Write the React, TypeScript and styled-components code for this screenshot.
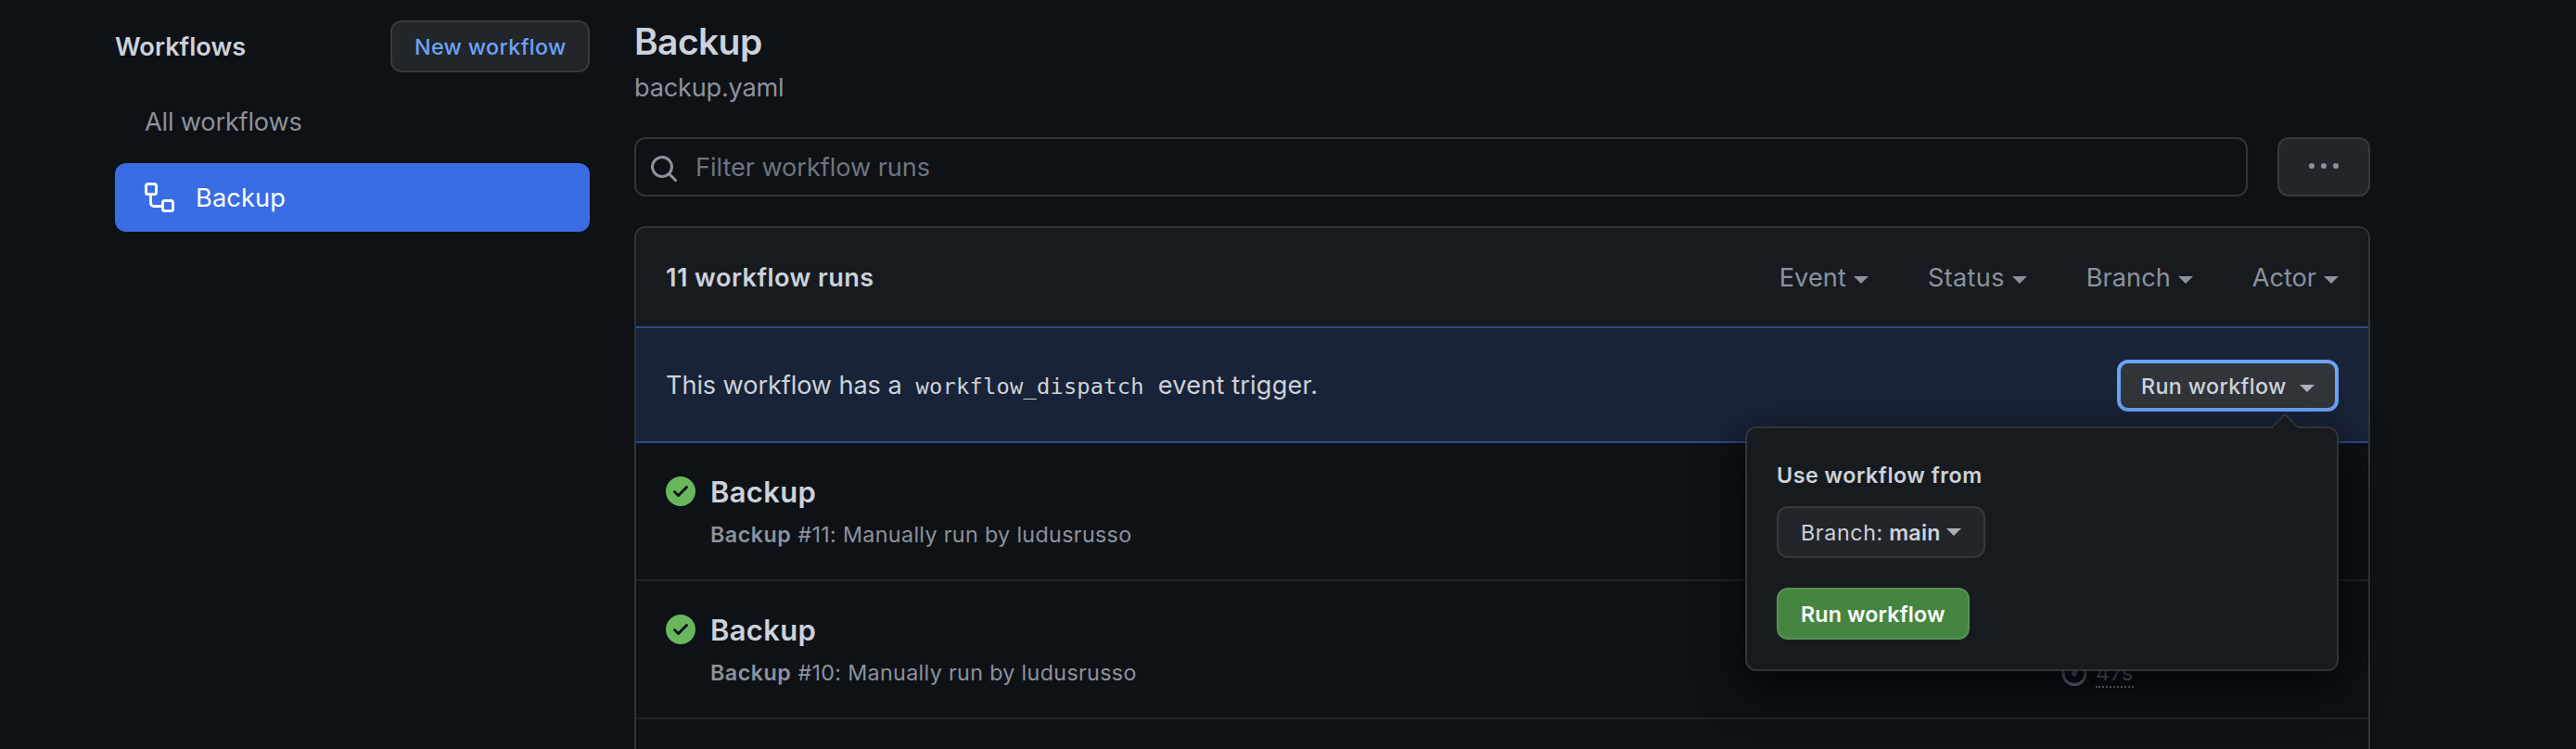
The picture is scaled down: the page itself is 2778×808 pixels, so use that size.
import React from 'react';
import styled, { createGlobalStyle } from 'styled-components';

const c = {
  canvas: '#0e1116',
  subtle: '#171b20',
  border: '#313539',
  rowBorder: '#222529',
  text: '#ccd2da',
  muted: '#8c929b',
  placeholder: '#6f757d',
  btn: '#22252a',
  btnBorder: '#36393e',
  link: '#6ca3f8',
  accent: '#396de4',
  infoBg: '#192337',
  infoBorder: '#2d4c86',
  success: '#68b75c',
  primary: '#448540',
  primaryBorder: '#579252',
};

const GlobalStyle = createGlobalStyle`
  *, *::before, *::after { box-sizing: border-box; }
  html, body { margin: 0; background: ${c.canvas}; }
  body {
    color: ${c.text};
    font-family: Inter, "Liberation Sans", sans-serif;
    overflow: hidden;
  }
`;

const Page = styled.div`
  display: flex;
  gap: 48px;
  width: 2778px;
  height: 808px;
  padding-left: 124px;
  overflow: hidden;
`;

const Label = styled.span<{ $size?: number; $weight?: number; $track?: number; $color?: string }>`
  white-space: pre;
  font-size: ${(p) => p.$size ?? 27.2}px;
  font-weight: ${(p) => p.$weight ?? 400};
  letter-spacing: ${(p) => p.$track ?? 0}px;
  color: ${(p) => p.$color ?? 'inherit'};
`;

const Sidebar = styled.nav`
  flex: none;
  width: 512px;
  padding-top: 22px;
`;

const SidebarHeader = styled.div`
  display: flex;
  align-items: center;
  justify-content: space-between;
  height: 56px;
  margin-bottom: 16px;
`;

const Button = styled.button<{ $width: number; $height?: number }>`
  display: flex;
  align-items: center;
  width: ${(p) => p.$width}px;
  height: ${(p) => p.$height ?? 56}px;
  padding: 0 24px;
  border: 2px solid ${c.btnBorder};
  border-radius: 12px;
  background: ${c.btn};
  color: ${c.text};
  font-family: inherit;
`;

const IconButton = styled(Button)`
  justify-content: center;
  padding: 0 0 2px;
  color: ${c.muted};
`;

const PrimaryButton = styled(Button)`
  background: ${c.primary};
  border-color: ${c.primaryBorder};
  color: #fff;
`;

const FocusedButton = styled(Button)`
  justify-content: space-between;
  padding: 0 22px;
  border: 4px solid ${c.link};
  background: #31353a;
`;

const NavItem = styled.a<{ $active?: boolean }>`
  display: flex;
  align-items: center;
  gap: 23px;
  height: 74px;
  margin-bottom: 8px;
  padding: 0 32px;
  border-radius: 12px;
  background: ${(p) => (p.$active ? c.accent : 'transparent')};
  color: ${(p) => (p.$active ? '#fff' : c.muted)};
`;

const Main = styled.main`
  flex: none;
  width: 1872px;
  padding-top: 16px;
`;

const Title = styled.h1`
  margin: 0;
  font-size: 39px;
  font-weight: 600;
  letter-spacing: -0.6px;
  line-height: 58px;
`;

const Subtitle = styled.div`
  line-height: 42px;
  margin-bottom: 32px;
  display: flex;
`;

const FilterRow = styled.div`
  display: flex;
  gap: 32px;
  margin-bottom: 32px;
`;

const SearchField = styled.div`
  display: flex;
  align-items: center;
  flex: 1;
  gap: 18px;
  height: 64px;
  padding: 0 14px;
  border: 2px solid ${c.border};
  border-radius: 12px;
  color: ${c.muted};

  svg { margin-top: 4px; }
`;

const Box = styled.section`
  border: 2px solid ${c.border};
  border-radius: 12px 12px 0 0;
  height: 600px;
`;

const BoxHeader = styled.header`
  display: flex;
  align-items: center;
  justify-content: space-between;
  height: 106px;
  padding: 0 32px;
  border-radius: 10px 10px 0 0;
  background: ${c.subtle};
`;

const Filters = styled.div`
  display: flex;
  gap: 64px;
`;

const Filter = styled.div`
  display: flex;
  align-items: center;
  gap: 8px;
  color: ${c.muted};
`;

const CaretIcon = styled.svg<{ $drop?: number; $dim?: boolean }>`
  flex: none;
  margin-top: ${(p) => p.$drop ?? 0}px;
  fill: currentColor;
  opacity: ${(p) => (p.$dim ? 0.8 : 1)};
`;

const Banner = styled.div`
  display: flex;
  align-items: center;
  justify-content: space-between;
  height: 126px;
  padding: 0 32px;
  border: solid ${c.infoBorder};
  border-width: 2px 0;
  background: ${c.infoBg};
`;

const BannerText = styled.div`
  display: flex;
  align-items: baseline;
`;

const Code = styled.code`
  padding: 0 15px 0 15px;
  font-family: "DejaVu Sans Mono", "Liberation Mono", monospace;
  font-size: 23.8px;
  letter-spacing: 0.16px;
`;

const MenuAnchor = styled.div`
  position: relative;
  margin-top: 2px;
`;

const Popover = styled.div`
  position: absolute;
  z-index: 2;
  top: 72px;
  right: 0;
  width: 640px;
  padding: 32px;
  border: 2px solid ${c.border};
  border-radius: 12px;
  background: ${c.subtle};
  box-shadow: 0 16px 48px #010409;
`;

const PopoverTip = styled.svg`
  position: absolute;
  top: -17px;
  right: 40px;
`;

const PopoverTitle = styled.div`
  display: flex;
  padding-top: 1px;
  line-height: 36px;
  margin-bottom: 15px;
`;

const BranchButton = styled(Button)`
  justify-content: space-between;
  margin-bottom: 32px;
`;

const Run = styled.article`
  display: flex;
  height: 149px;
  padding-left: 32px;
  border-bottom: 2px solid ${c.rowBorder};
`;

const RunStatus = styled.svg`
  flex: none;
  margin: 36px 16px 0 0;
  fill: ${c.success};
`;

const RunBody = styled.div`
  flex: 1;
  padding-top: 34px;
`;

const RunTitle = styled.div`
  display: flex;
  line-height: 37px;
  margin-bottom: 10px;
`;

const RunMeta = styled.div`
  display: flex;
  align-items: baseline;
  gap: 7px;
  line-height: 36px;
  color: ${c.muted};
`;

const RunTiming = styled.div`
  display: flex;
  align-items: flex-start;
  gap: 7px;
  width: 333px;
  height: 36px;
  margin-top: 80px;
  color: ${c.muted};

  svg { margin-top: 1px; }
`;

const Duration = styled(Label)`
  height: 35px;
  line-height: 38px;
  border-bottom: 2px dotted currentColor;
`;

function Caret({ drop = 6, dim = false }: { drop?: number; dim?: boolean }) {
  return (
    <CaretIcon width="16" height="8" viewBox="0 0 16 8" $drop={drop} $dim={dim}>
      <path d="M0 0h16L8 8z" />
    </CaretIcon>
  );
}

function Octicon({ d }: { d: string }) {
  return (
    <svg width="32" height="32" viewBox="0 0 16 16" fill="currentColor" fillRule="evenodd">
      <path d={d} />
    </svg>
  );
}

const workflowPath =
  'M0 1.75C0 .784.784 0 1.75 0h3.5C6.216 0 7 .784 7 1.75v3.5A1.75 1.75 0 015.25 7H4v4a1 1 0 001 1h4v-1.25C9 9.784 9.784 9 10.75 9h3.5c.966 0 1.75.784 1.75 1.75v3.5A1.75 1.75 0 0114.25 16h-3.5A1.75 1.75 0 019 14.25v-.75H5A2.5 2.5 0 012.5 11V7h-.75A1.75 1.75 0 010 5.25v-3.5zm1.75-.25a.25.25 0 00-.25.25v3.5c0 .138.112.25.25.25h3.5a.25.25 0 00.25-.25v-3.5a.25.25 0 00-.25-.25h-3.5zm9 9a.25.25 0 00-.25.25v3.5c0 .138.112.25.25.25h3.5a.25.25 0 00.25-.25v-3.5a.25.25 0 00-.25-.25h-3.5z';
const searchPath =
  'M11.5 7a4.499 4.499 0 11-8.998 0A4.499 4.499 0 0111.5 7zm-.82 4.74a6 6 0 111.06-1.06l3.04 3.04a.75.75 0 11-1.06 1.06l-3.04-3.04z';
const stopwatchPath =
  'M5.75.75A.75.75 0 016.5 0h3a.75.75 0 010 1.5h-.75v1l-.001.041a6.718 6.718 0 013.464 1.435l.007-.006.75-.75a.75.75 0 111.06 1.06l-.75.75-.006.007a6.75 6.75 0 11-10.548 0L2.72 5.03l-.75-.75a.75.75 0 011.06-1.06l.75.75.007.006A6.718 6.718 0 017.25 2.541a.756.756 0 010-.041v-1H6.5a.75.75 0 01-.75-.75zM8 14.5A5.25 5.25 0 108 4a5.25 5.25 0 000 10.5zm.389-6.7l1.33-1.33a.75.75 0 111.061 1.06L9.45 8.861A1.502 1.502 0 018 10.75a1.5 1.5 0 11.389-2.95z';

const filters = [
  { name: 'Event', track: 0.07 },
  { name: 'Status', track: 0.3 },
  { name: 'Branch', track: 0 },
  { name: 'Actor', track: -0.05 },
];

const runs = [
  { id: 11, timing: undefined },
  { id: 10, timing: '47s' },
];

export default function App() {
  return (
    <Page>
      <GlobalStyle />
      <Sidebar>
        <SidebarHeader>
          <Label $weight={600}>Workflows</Label>
          <Button $width={215}>
            <Label $size={23.3} $weight={500} $track={0.35} $color={c.link}>New workflow</Label>
          </Button>
        </SidebarHeader>
        <NavItem>
          <Label $track={-0.2}>All workflows</Label>
        </NavItem>
        <NavItem $active>
          <Octicon d={workflowPath} />
          <Label $track={0.15}>Backup</Label>
        </NavItem>
      </Sidebar>
      <Main>
        <Title>Backup</Title>
        <Subtitle>
          <Label $track={-0.24} $color={c.muted}>backup.yaml</Label>
        </Subtitle>
        <FilterRow>
          <SearchField>
            <Octicon d={searchPath} />
            <Label $track={-0.08} $color={c.placeholder}>Filter workflow runs</Label>
          </SearchField>
          <IconButton $width={100} $height={64}>
            <svg width="32" height="6" viewBox="0 0 32 6" fill="currentColor">
              <circle cx="3" cy="3" r="3" />
              <circle cx="16" cy="3" r="3" />
              <circle cx="29" cy="3" r="3" />
            </svg>
          </IconButton>
        </FilterRow>
        <Box>
          <BoxHeader>
            <Label $weight={600} $track={0.42}>11 workflow runs</Label>
            <Filters>
              {filters.map((f) => (
                <Filter key={f.name}>
                  <Label $track={f.track}>{f.name}</Label>
                  <Caret />
                </Filter>
              ))}
            </Filters>
          </BoxHeader>
          <Banner>
            <BannerText>
              <Label $track={-0.12}>This workflow has a</Label>
              <Code>workflow_dispatch</Code>
              <Label $track={0.15}>event trigger.</Label>
            </BannerText>
            <MenuAnchor>
              <FocusedButton $width={239}>
                <Label $size={23.3} $weight={500} $track={0.35}>Run workflow</Label>
                <Caret dim />
              </FocusedButton>
              <Popover>
                <PopoverTip width="32" height="19" viewBox="0 0 32 19">
                  <path d="M1 17.5L16 2l15 15.5V19H1z" fill={c.subtle} />
                  <path d="M1.5 16.5L16 2l14.5 14.5" fill="none" stroke={c.border} strokeWidth="1.6" />
                </PopoverTip>
                <PopoverTitle>
                  <Label $size={23.3} $weight={600} $track={0.5}>Use workflow from</Label>
                </PopoverTitle>
                <BranchButton $width={225}>
                  <Label $size={23.3} $track={0.6}>Branch:</Label>
                  <Label $size={23.3} $weight={600} $track={0.2}>main</Label>
                  <Caret drop={0} dim />
                </BranchButton>
                <PrimaryButton $width={208}>
                  <Label $size={23.3} $weight={600} $track={0.1}>Run workflow</Label>
                </PrimaryButton>
              </Popover>
            </MenuAnchor>
          </Banner>
          {runs.map((run) => (
            <Run key={run.id}>
              <RunStatus width="32" height="32" viewBox="0 0 16 16">
                <path
                  fillRule="evenodd"
                  d="M8 16A8 8 0 108 0a8 8 0 000 16zm3.78-9.72a.75.75 0 00-1.06-1.06L6.75 9.19 5.28 7.72a.75.75 0 00-1.06 1.06l2 2a.75.75 0 001.06 0l4.5-4.5z"
                />
              </RunStatus>
              <RunBody>
                <RunTitle>
                  <Label $size={31} $weight={600} $track={0.3}>Backup</Label>
                </RunTitle>
                <RunMeta>
                  <Label $size={23.3} $weight={600} $track={0.5}>Backup</Label>
                  <Label $size={23.3} $track={0.33}>{`#${run.id}: Manually run by ludusrusso`}</Label>
                </RunMeta>
              </RunBody>
              {run.timing && (
                <RunTiming>
                  <Octicon d={stopwatchPath} />
                  <Duration $size={23.3} $track={0.34}>{run.timing}</Duration>
                </RunTiming>
              )}
            </Run>
          ))}
        </Box>
      </Main>
    </Page>
  );
}
